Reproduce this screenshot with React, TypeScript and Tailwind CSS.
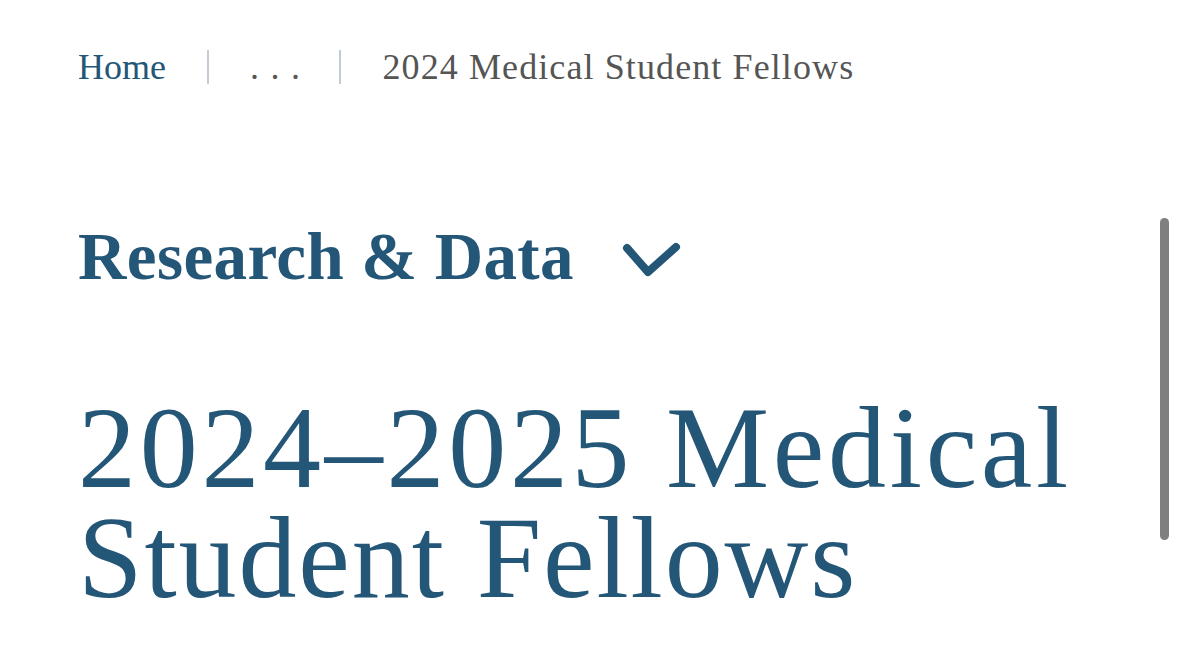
export default function App() {
  return (
    <div className="relative min-h-[658px] w-full overflow-hidden bg-white font-['Liberation_Serif',serif]">
      <div className="flex flex-col pl-[78px] pt-[44px]">
        {/* Breadcrumb */}
        <nav className="flex items-center text-[36px] leading-[46px]">
          <span className="text-[#245678]">Home</span>
          <span className="mx-[41px] h-[34px] w-[2px] bg-[#c2ccd6]" />
          <span className="tracking-[11.5px] text-[#555]">...</span>
          <span className="ml-[28px] mr-[41px] h-[34px] w-[2px] bg-[#c2ccd6]" />
          <span className="tracking-[1.1px] text-[#555]">2024 Medical Student Fellows</span>
        </nav>

        {/* Section toggle */}
        <div className="mt-[133px] flex items-start">
          <h2 className="text-[67px] font-bold leading-[66px] tracking-[0.4px] text-[#245678]">Research &amp; Data</h2>
          <svg className="ml-[47px] mt-[17px]" width="62" height="40" viewBox="0 0 62 40" fill="none">
            <path d="M6 8 L27 32 L55 7" stroke="#245678" strokeWidth="8" strokeLinecap="round" strokeLinejoin="round" />
          </svg>
        </div>

        {/* Title */}
        <h1 className="mt-[104px] flex flex-col text-[116px] leading-[110px] text-[#245678]">
          <span className="tracking-[3.7px]">2024–2025 Medical</span>
          <span className="tracking-[1.9px]">Student Fellows</span>
        </h1>
      </div>

      {/* Scroll indicator */}
      <div className="absolute left-[1160px] top-[218px] h-[322px] w-[9px] rounded-full bg-[#7f7f7f]" />
    </div>
  );
}
